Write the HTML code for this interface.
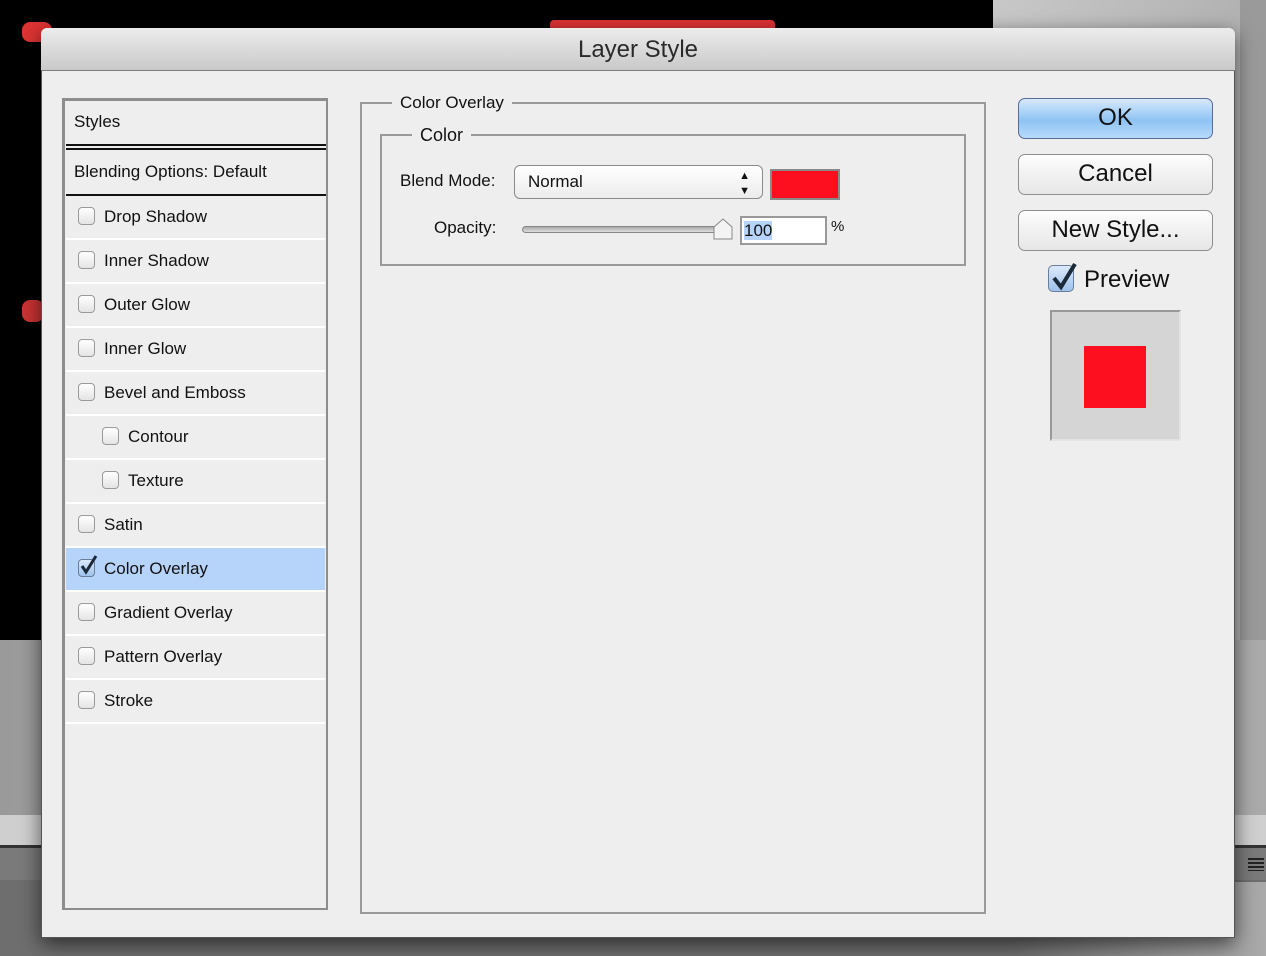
<!DOCTYPE html>
<html><head><meta charset="utf-8"><style>
*{margin:0;padding:0;box-sizing:border-box}
body{width:1266px;height:956px;overflow:hidden;position:relative;background:#6e6e6e;font-family:"Liberation Sans",sans-serif;color:#111}
.a{position:absolute}
.cb{position:absolute;width:17px;height:18px;border:1px solid #9a9a9a;border-radius:4px;background:linear-gradient(#fff,#e4e4e4)}
.row{position:absolute;left:66px;width:259px;height:42px;font-size:17px;line-height:42px}
.sep{position:absolute;left:66px;width:259px;height:2px;background:#fff}
.btn{position:absolute;left:1018px;width:195px;height:41px;border:1px solid #8e8e8e;border-radius:7px;background:linear-gradient(#fdfdfd,#e6e6e6);font-size:24px;text-align:center;line-height:38px}
</style></head><body>
<div class="a" style="left:0;top:0;width:993px;height:640px;background:#000"></div>
<div class="a" style="left:22px;top:22px;width:30px;height:20px;background:#d33;border-radius:8px"></div>
<div class="a" style="left:22px;top:300px;width:22px;height:22px;background:#c33;border-radius:8px"></div>
<div class="a" style="left:550px;top:20px;width:225px;height:14px;background:#d33;border-radius:4px"></div>
<div class="a" style="left:993px;top:0;width:273px;height:640px;background:linear-gradient(90deg,#c8c8c8,#b0b0b0)"></div>
<div class="a" style="left:1240px;top:0;width:26px;height:640px;background:#9a9a9a"></div>
<div class="a" style="left:0;top:640px;width:1266px;height:175px;background:linear-gradient(90deg,#9a9a9a,#b8b8b8 50%,#aaa)"></div>
<div class="a" style="left:0;top:815px;width:1266px;height:30px;background:#cfcfcf"></div>
<div class="a" style="left:0;top:845px;width:1266px;height:3px;background:#333"></div>
<div class="a" style="left:0;top:848px;width:1266px;height:32px;background:#7a7a7a"></div>
<div class="a" style="left:1248px;top:858px;width:16px;height:13px;background:repeating-linear-gradient(#222 0 2px,transparent 2px 4px)"></div>
<div class="a" style="left:0;top:882px;width:1266px;height:74px;background:linear-gradient(90deg,#6e6e6e 80%,#aaa)"></div>

<div class="a" style="left:41px;top:28px;width:1194px;height:910px;background:#eeeeee;border:1px solid #555;border-top:none;box-shadow:0 6px 20px rgba(0,0,0,.6);border-radius:6px 6px 0 0"></div>
<div class="a" style="left:41px;top:28px;width:1194px;height:43px;border-radius:6px 6px 0 0;background:linear-gradient(#ececec,#c9c9c9);border-bottom:1px solid #7c7c7c;text-align:center;font-size:24px;line-height:44px;color:#2a2a2a">Layer Style</div>

<div class="a" style="left:62px;top:98px;width:266px;height:812px;border:3px solid #8d8d8d;border-right-width:2px;border-bottom-width:2px;background:#eeeeee"></div>
<div class="row" style="top:100px;padding-left:8px;line-height:44px">Styles</div>
<div class="a" style="left:66px;top:144px;width:260px;height:2px;background:#111"></div>
<div class="a" style="left:66px;top:148px;width:260px;height:2px;background:#111"></div>
<div class="row" style="top:150px;padding-left:8px;line-height:44px">Blending Options: Default</div>
<div class="a" style="left:66px;top:194px;width:260px;height:2px;background:#111"></div>

<div class="a" style="left:66px;top:547px;width:259px;height:43px;background:#b6d3fa"></div>
<div class="row" style="top:196px;padding-left:38px">Drop Shadow</div><div class="cb" style="left:78px;top:207px"></div><div class="sep" style="top:238px"></div>
<div class="row" style="top:240px;padding-left:38px">Inner Shadow</div><div class="cb" style="left:78px;top:251px"></div><div class="sep" style="top:282px"></div>
<div class="row" style="top:284px;padding-left:38px">Outer Glow</div><div class="cb" style="left:78px;top:295px"></div><div class="sep" style="top:326px"></div>
<div class="row" style="top:328px;padding-left:38px">Inner Glow</div><div class="cb" style="left:78px;top:339px"></div><div class="sep" style="top:370px"></div>
<div class="row" style="top:372px;padding-left:38px">Bevel and Emboss</div><div class="cb" style="left:78px;top:383px"></div><div class="sep" style="top:414px"></div>
<div class="row" style="top:416px;padding-left:62px">Contour</div><div class="cb" style="left:102px;top:427px"></div><div class="sep" style="top:458px"></div>
<div class="row" style="top:460px;padding-left:62px">Texture</div><div class="cb" style="left:102px;top:471px"></div><div class="sep" style="top:502px"></div>
<div class="row" style="top:504px;padding-left:38px">Satin</div><div class="cb" style="left:78px;top:515px"></div><div class="sep" style="top:546px"></div>
<div class="row" style="top:548px;padding-left:38px">Color Overlay</div><div class="cb" style="left:78px;top:559px;background:linear-gradient(#dbe9fb,#9fc2ec);border-color:#6a7e9a"></div>
<svg class="a" style="left:78px;top:553px" width="22" height="24"><path d="M4 13 L8 19 L18 3" stroke="#1a2a3a" stroke-width="3" fill="none"/></svg>
<div class="sep" style="top:590px"></div>
<div class="row" style="top:592px;padding-left:38px">Gradient Overlay</div><div class="cb" style="left:78px;top:603px"></div><div class="sep" style="top:634px"></div>
<div class="row" style="top:636px;padding-left:38px">Pattern Overlay</div><div class="cb" style="left:78px;top:647px"></div><div class="sep" style="top:678px"></div>
<div class="row" style="top:680px;padding-left:38px">Stroke</div><div class="cb" style="left:78px;top:691px"></div><div class="sep" style="top:722px"></div>

<div class="a" style="left:360px;top:102px;width:626px;height:812px;border:2px solid #9a9a9a"></div>
<div class="a" style="left:392px;top:92px;padding:0 8px;background:#eee;font-size:17px;line-height:22px">Color Overlay</div>
<div class="a" style="left:380px;top:134px;width:586px;height:132px;border:2px solid #9a9a9a"></div>
<div class="a" style="left:412px;top:124px;padding:0 8px;background:#eee;font-size:18px;line-height:22px">Color</div>
<div class="a" style="left:400px;top:170px;font-size:17px;line-height:22px">Blend Mode:</div>
<div class="a" style="left:514px;top:165px;width:249px;height:34px;border:1px solid #8a8a8a;border-radius:6px;background:linear-gradient(#fff,#ececec);font-size:17px;line-height:32px;padding-left:13px">Normal<span style="position:absolute;right:12px;top:0;font-size:11px;line-height:15px;padding-top:3px">▲<br>▼</span></div>
<div class="a" style="left:770px;top:169px;width:70px;height:31px;border:2px solid #8a8a8a;background:#fd0f1f"></div>
<div class="a" style="left:434px;top:217px;font-size:17px;line-height:22px">Opacity:</div>
<div class="a" style="left:522px;top:226px;width:205px;height:7px;border:1px solid #888;border-radius:4px;background:linear-gradient(#aaa,#ddd)"></div>
<svg class="a" style="left:713px;top:218px" width="20" height="22"><path d="M1 21 V9 L10 1 L19 9 V21 Z" fill="#f4f4f4" stroke="#888"/></svg>
<div class="a" style="left:740px;top:216px;width:87px;height:29px;border:2px solid #999;background:#fff;font-size:17px;line-height:25px;padding-left:2px"><span style="background:#b6d3fa">100</span></div>
<div class="a" style="left:831px;top:218px;font-size:15px">%</div>

<div class="btn" style="top:98px;background:linear-gradient(#d7e9fb,#8fc3f3 55%,#b7dbfb);border-color:#5a6b9a">OK</div>
<div class="btn" style="top:154px">Cancel</div>
<div class="btn" style="top:210px">New Style...</div>
<div class="cb" style="left:1048px;top:265px;width:26px;height:27px;background:linear-gradient(#dbe9fb,#9fc2ec);border-color:#6a7e9a;border-radius:5px"></div>
<svg class="a" style="left:1049px;top:261px" width="30" height="32"><path d="M5 17 L12 26 L26 3" stroke="#1a2a3a" stroke-width="4" fill="none"/></svg>
<div class="a" style="left:1084px;top:266px;font-size:24px;line-height:28px">Preview</div>
<div class="a" style="left:1050px;top:310px;width:131px;height:131px;border:2px solid #999;border-right-color:#e4e4e4;border-bottom-color:#e4e4e4;background:#d5d5d5"></div>
<div class="a" style="left:1084px;top:346px;width:62px;height:62px;background:#fd0f1f"></div>
</body></html>
